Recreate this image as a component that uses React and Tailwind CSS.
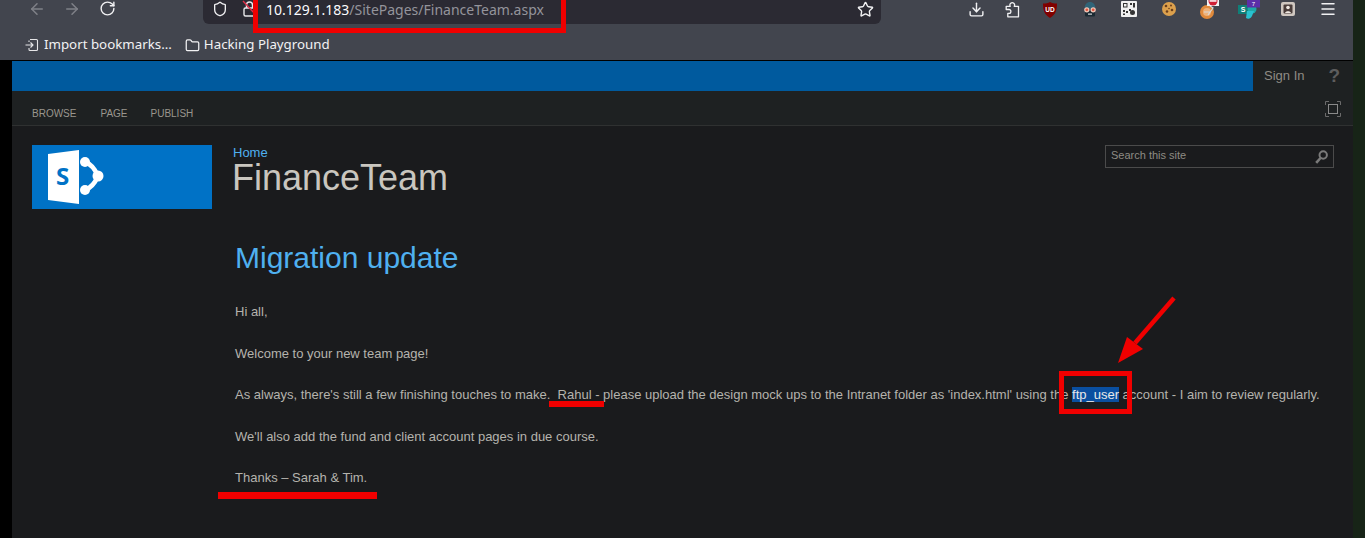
import React from "react";
import { ArrowLeft, ArrowRight, RotateCw, Shield, Star, Download, Folder, Menu } from "lucide-react";

function LockOff() {
  return (
    <svg width="16" height="18" viewBox="0 0 16 18" fill="none" className="shrink-0">
      <rect x="2" y="8" width="11" height="8" rx="1.5" stroke="#e8e8ea" strokeWidth="1.4" />
      <path d="M4.5 8V5a3 3 0 0 1 6 0v3" stroke="#e8e8ea" strokeWidth="1.4" />
      <path d="M1 1l13 14" stroke="#e0304a" strokeWidth="1.4" />
    </svg>
  );
}

function ImportIcon() {
  return (
    <svg width="14" height="14" viewBox="0 0 14 14" fill="none">
      <path d="M5 1.5h6.5a1 1 0 0 1 1 1v9a1 1 0 0 1-1 1H5a1 1 0 0 1-1-1V10M4 4V2.5" stroke="#e6e6e8" strokeWidth="1.1" />
      <path d="M0.5 7h7M5.5 4.5L8 7l-2.5 2.5" stroke="#e6e6e8" strokeWidth="1.1" />
    </svg>
  );
}

function PuzzleOutline() {
  return (
    <svg width="15" height="17" viewBox="0 0 15 17" fill="none" stroke="#f1f1f3" strokeWidth="1.300" strokeLinejoin="round">
      <path d="M13.500 15.800H2.800V12.300H4a1.900 1.900 0 0 0 0-3.800H1.200V5.300H5.300a2.300 2.300 0 1 1 3.900 0H13.500z" />
    </svg>
  );
}

function UBlock() {
  return (
    <svg width="16" height="17" viewBox="0 0 16 17">
      <path d="M1 2.5C4 2.5 6 2 8 1c2 1 4 1.5 7 1.5 0 6-1 11-7 14.5C2 13.500 1 8.500 1 2.500z" fill="#800000" />
      <text x="8" y="10.500" textAnchor="middle" fontSize="6.500" fontWeight="700" fill="#fff" fontFamily="Liberation Sans, sans-serif">UD</text>
    </svg>
  );
}

function GogglesIcon() {
  return (
    <svg width="16" height="16" viewBox="0 0 16 16">
      <path d="M2.500 8C2.500 3.500 5 1 8 1s5.500 2.500 5.500 7z" fill="#2f6478" />
      <rect x="3" y="10" width="10" height="5.500" rx="1" fill="#1b2a33" />
      <circle cx="4.800" cy="8.800" r="2.600" fill="#f0c8b8" />
      <circle cx="11.200" cy="8.800" r="2.600" fill="#f0c8b8" />
      <circle cx="4.800" cy="8.800" r="1.400" fill="#e2553f" />
      <circle cx="11.200" cy="8.800" r="1.400" fill="#e2553f" />
      <rect x="6" y="12.500" width="4" height="1.200" fill="#d8d8d8" />
    </svg>
  );
}

function QrIcon() {
  return (
    <svg width="16" height="16" viewBox="0 0 16 16">
      <rect width="16" height="16" rx="1" fill="#f0f0f0" />
      <path d="M2 2h4.500v4.500H2zM9 2h2v2H9zM12 2h2v4.500h-2zM2 9h2v2H2zM5 10h2v2H5zM2 12.500h2V14H2zM8 8h2v2H8z" fill="#333" />
      <circle cx="11.500" cy="11.500" r="2.500" fill="#333" />
      <rect x="3" y="3" width="2.500" height="2.500" fill="#f0f0f0" />
    </svg>
  );
}

function CookieIcon() {
  return (
    <svg width="16" height="16" viewBox="0 0 16 16">
      <circle cx="8" cy="8" r="7" fill="#dca04c" />
      <circle cx="5" cy="5" r="1.300" fill="#6b3f1d" />
      <circle cx="10" cy="4.500" r="1" fill="#6b3f1d" />
      <circle cx="11" cy="9" r="1.300" fill="#6b3f1d" />
      <circle cx="6" cy="10.500" r="1.300" fill="#6b3f1d" />
      <circle cx="8" cy="7.500" r=".8" fill="#6b3f1d" />
    </svg>
  );
}

function BlockedIcon() {
  return (
    <svg width="20" height="22" viewBox="0 0 20 22" className="overflow-visible -mt-[3px]">
      <circle cx="8" cy="15" r="7" fill="#e08a3c" />
      <circle cx="8" cy="15" r="4" fill="#eeb27a" />
      <path d="M5 15h6M11 9l3 2-5 7" stroke="#d8d8d8" strokeWidth="1.200" fill="none" />
      <rect x="8" y="0" width="12" height="9" fill="#f2f2f2" />
      <circle cx="14" cy="4" r="4.500" fill="#d11f35" />
      <rect x="10.500" y="3.200" width="7" height="1.500" fill="#fff" />
    </svg>
  );
}

function TealIcon() {
  return (
    <svg width="20" height="22" viewBox="0 0 20 22" className="overflow-visible -mt-[3px]">
      <rect x="0" y="8" width="10" height="9" fill="#0f7f78" />
      <circle cx="14" cy="12" r="4.500" fill="#1ea8a8" />
      <path d="M9 14h7l-2 5a4 4 0 0 1-6 2z" fill="#29c1cf" />
      <text x="5" y="15" textAnchor="middle" fontSize="7" fontWeight="700" fill="#fff" fontFamily="Liberation Sans, sans-serif">S</text>
      <rect x="9" y="0" width="13" height="10.500" fill="#5b2fa8" />
      <text x="15.500" y="9" textAnchor="middle" fontSize="6" fill="#fff" fontFamily="Liberation Sans, sans-serif">7</text>
    </svg>
  );
}

function SafeIcon() {
  return (
    <svg width="14" height="14" viewBox="0 0 14 14">
      <rect width="14" height="14" rx="2" fill="#cfc7c0" />
      <rect x="2.500" y="2.500" width="9" height="9" rx="1" fill="#4a3d3a" />
      <circle cx="7" cy="5.500" r="1.800" fill="#efe8e2" />
      <path d="M4 11c.5-2.500 5.500-2.500 6 0z" fill="#efe8e2" />
    </svg>
  );
}

function SharePointLogo() {
  return (
    <svg width="60" height="56" viewBox="0 0 60 56">
      <path d="M0 5L31 1v54L0 51z" fill="#fff" />
      <text x="14.500" y="36" textAnchor="middle" fontSize="24" fontWeight="700" fill="#0072c6" fontFamily="'Open Sans', sans-serif">S</text>
      <path d="M37 13c6 2 10 7 13 14c-3 7-7 12-13 14" stroke="#fff" strokeWidth="4.500" fill="none" />
      <circle cx="37" cy="13" r="5" fill="#fff" />
      <circle cx="37" cy="41" r="5" fill="#fff" />
      <circle cx="50" cy="27" r="5.500" fill="#fff" />
    </svg>
  );
}

function FocusIcon() {
  return (
    <svg width="16" height="16" viewBox="0 0 16 16" fill="none" stroke="#6b6b6b">
      <path d="M.5 4V.5H4M12 .5h3.500V4M15.500 12v3.500H12M4 15.500H.5V12" />
      <rect x="3.500" y="3.500" width="9" height="9" stroke="#8a8a8a" />
    </svg>
  );
}

function SearchGlass() {
  return (
    <svg width="13" height="14" viewBox="0 0 13 14" fill="none" stroke="#7a7a7a" className="mt-[1px]">
      <circle cx="8.200" cy="5" r="3.700" strokeWidth="2" />
      <path d="M5.500 8L1.200 12.800" strokeWidth="2.600" />
    </svg>
  );
}

function Annotations() {
  return (
    <>
      <div className="absolute left-[253px] top-[-6px] w-[313px] h-[39px] border-[5px] border-[#f00000]" />
      <div className="absolute left-[1059px] top-[371px] w-[73px] h-[43px] border-[5px] border-[#f00000]" />
      <div className="absolute left-[549px] top-[401px] w-[55px] h-[6px] bg-[#f00000]" />
      <div className="absolute left-[218px] top-[492px] w-[159px] h-[7px] bg-[#f00000]" />
      <svg className="absolute left-[1110px] top-[290px]" width="70" height="80" viewBox="0 0 70 80">
        <path d="M64 8L25 53" stroke="#f00000" strokeWidth="4.500" />
        <path d="M8 73L17 47L33 59z" fill="#f00000" />
      </svg>
    </>
  );
}

function Ext({ children }) {
  return <div className="flex items-center justify-center w-[39.700px] h-[18px]">{children}</div>;
}

function ExtNarrow({ children }) {
  return <div className="flex items-center justify-center w-[36px] h-[18px]">{children}</div>;
}

const tools = "text-[#f1f1f3]";

export default function App() {
  return (
    <div className="relative w-[1365px] h-[538px] overflow-hidden bg-[#172417] font-['Liberation_Sans',sans-serif]">
      <div className="w-[1353px] h-[60px] bg-[#42454e] font-['Noto_Sans',sans-serif]">
        {/* nav bar */}
        <div className="flex items-start h-[24px] pl-[28px]">
          <ArrowLeft size={18} className="text-[#7f8188]" />
          <ArrowRight size={18} className="ml-[17px] text-[#7f8188]" />
          <RotateCw size={17} className={"ml-[18px] " + tools} />
          <div className="flex items-center ml-[87px] w-[678px] h-[24px] pb-[6px] bg-[#2b2a33] rounded-b-md pl-[9px] pr-[7px]">
            <Shield size={16} className={tools} />
            <div className="ml-[14px]"><LockOff /></div>
            <div className="ml-[8px] text-[14px] text-[#fbfbfe]">
              10.129.1.183<span className="text-[#94949b]">/SitePages/FinanceTeam.aspx</span>
            </div>
            <Star size={17} className={"ml-auto " + tools} />
          </div>
          <div className="flex items-center ml-[77px]">
            <ExtNarrow><Download size={17} className={tools} /></ExtNarrow>
            <ExtNarrow><PuzzleOutline /></ExtNarrow>
            <Ext><UBlock /></Ext>
            <Ext><GogglesIcon /></Ext>
            <Ext><QrIcon /></Ext>
            <Ext><CookieIcon /></Ext>
            <Ext><BlockedIcon /></Ext>
            <Ext><TealIcon /></Ext>
            <Ext><SafeIcon /></Ext>
            <Ext><Menu size={18} className={tools} /></Ext>
          </div>
        </div>
        {/* bookmarks */}
        <div className="flex items-center h-[36px] pt-[6px] pl-[25px] text-[13.300px] text-[#f2f2f4]">
          <ImportIcon />
          <span className="ml-[5px]">Import bookmarks...</span>
          <Folder size={15} className="ml-[13px]" />
          <span className="ml-[4px]">Hacking Playground</span>
        </div>
      </div>

      <div className="flex h-[478px]">
        <div className="w-[12px] bg-black" />
        <div className="w-[1341px] bg-[#1a1b1d]">
          <div className="border-t border-black flex h-[31px]">
            <div className="flex-1 bg-[#005a9e]" />
            <div className="flex items-center w-[100px] bg-[#1e2122] pl-[11px] text-[13px] text-[#8e8b84]">
              Sign In
              <span className="ml-[24px] text-[19px] font-bold text-[#5d5d5d]">?</span>
            </div>
          </div>
          <div className="flex items-start h-[35px] bg-[#1e2122] border-b border-[#2f3131] pl-[20px] pr-[12px] text-[10px] text-[#9a968e]">
            <span className="mt-[15px]">BROWSE</span>
            <span className="mt-[15px] ml-[24px]">PAGE</span>
            <span className="mt-[15px] ml-[23px]">PUBLISH</span>
            <div className="ml-auto mt-[10px]"><FocusIcon /></div>
          </div>

          <div className="flex pt-[19px] pl-[20px] pr-[19px]">
            <div className="flex items-center w-[180px] h-[64px] pl-[16px] bg-[#0072c6]">
              <SharePointLogo />
            </div>
            <div className="ml-[21px]">
              <div className="text-[13px] leading-[15px] text-[#4fb0f0]">Home</div>
              <div className="-ml-[1px] mt-[1px] text-[36px] leading-[33px] text-[#c9c6bf]">FinanceTeam</div>
            </div>
            <div className="flex items-center justify-between ml-auto w-[229px] h-[23px] border border-[#4b4b4b] pl-[5px] pr-[5px] text-[11px] text-[#8e8b84]">
              <span className="-mt-[2px]">Search this site</span>
              <SearchGlass />
            </div>
          </div>

          <div className="pl-[223px] pt-[30px] text-[13px] text-[#b5b3ad]">
            <h1 className="text-[30px] leading-[38px] text-[#4fb0f0]">Migration update</h1>
            <p className="mt-[27px] leading-[15px]">Hi all,</p>
            <p className="mt-[27px] leading-[15px]">Welcome to your new team page!</p>
            <p className="mt-[26px] leading-[15px] whitespace-nowrap">
              As always, there's still a few finishing touches to make.&nbsp; Rahul - please upload the design mock ups to the Intranet folder as 'index.html' using the <span className="bg-[#0a4fa0] text-[#e8e8e8]">ftp_user</span> account - I aim to review regularly.
            </p>
            <p className="mt-[27px] leading-[15px]">We'll also add the fund and client account pages in due course.</p>
            <p className="mt-[26px] leading-[15px]">Thanks – Sarah &amp; Tim.</p>
          </div>
        </div>
      </div>
      <Annotations />
    </div>
  );
}
